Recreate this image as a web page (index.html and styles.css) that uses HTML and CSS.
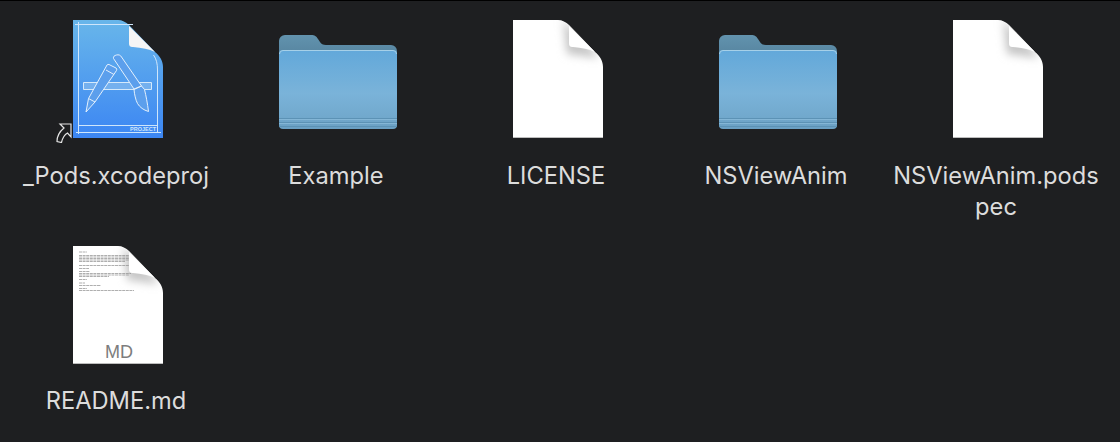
FILE: index.html
```html
<!DOCTYPE html>
<html lang="en">
<head>
  <meta charset="UTF-8">
  <title>NSViewAnim</title>
  <link rel="stylesheet" href="styles.css">
</head>
<body>

  <!-- shared shapes -->
  <svg class="defs" width="0" height="0">
    <defs>
      <linearGradient id="folderBack" x1="0" y1="0" x2="0" y2="1">
        <stop offset="0" stop-color="#6293ae"/>
        <stop offset="1" stop-color="#4d7995"/>
      </linearGradient>
      <linearGradient id="folderFront" x1="0" y1="0" x2="0" y2="1">
        <stop offset="0" stop-color="#62a8da"/>
        <stop offset="0.55" stop-color="#7ab3d9"/>
        <stop offset="0.84" stop-color="#72a9cd"/>
        <stop offset="1" stop-color="#6a9fc3"/>
      </linearGradient>
      <linearGradient id="xcodeBlue" x1="0" y1="0" x2="0" y2="1">
        <stop offset="0" stop-color="#68b6ea"/>
        <stop offset="1" stop-color="#3c86f3"/>
      </linearGradient>
      <filter id="foldBlur" x="-50%" y="-50%" width="200%" height="200%">
        <feGaussianBlur stdDeviation="4"/>
      </filter>
      <clipPath id="pageClip">
        <path d="M0 0h45c4 0 8 2 11 5l26 27c5 4 8 9 8 15v71H0z"/>
      </clipPath>
      <symbol id="folder" viewBox="0 0 120 100">
        <path d="M1 12a6 6 0 0 1 6-6h26c4 0 5 1 7 4l2 3c1 2 3 3 6 3h65a6 6 0 0 1 6 6v20H1z" fill="url(#folderBack)"/>
        <rect x="1" y="21" width="118" height="79" rx="4" fill="url(#folderFront)"/>
        <path d="M1.500 25a3.500 3.500 0 0 1 3.500-3.500h110a3.500 3.500 0 0 1 3.500 3.500" fill="none" stroke="#a6d0e8" stroke-width="1"/>
        <path d="M1 89.500h118M1 93.500h118M1 97.500h118" stroke="#5c92b5" stroke-width="1"/>
        <path d="M1 90.500h118M1 94.500h118" stroke="#84b6d6" stroke-width="1"/>
      </symbol>
      <symbol id="page" viewBox="0 0 90 118">
        <g clip-path="url(#pageClip)">
          <rect width="90" height="118" fill="#fff"/>
          <path d="M50 0L84 34V38L54 34z" fill="#c6c6c6" filter="url(#foldBlur)"/>
        </g>
        <path d="M0 117.500h90" stroke="#bdbdbd" stroke-width="1"/>
      </symbol>
      <symbol id="fold" viewBox="0 0 90 118">
        <path d="M56 6l26 26c-6-3-13-4-22-5-3 0-4-1-4-4z" fill="#fff"/>
      </symbol>
    </defs>
  </svg>

  <div class="grid">

    <div class="item">
      <div class="icon">
        <svg class="xcode" viewBox="0 0 90 118">
          <path d="M0 0h45c4 0 8 2 11 5l26 27c5 4 8 9 8 15v71H0z" fill="url(#xcodeBlue)"/>
          <path d="M5.500 2v112M2 4.500h58M3 112.500h85M5 105.500h79M84.500 112V50c0-6-1-11-4-15" fill="none" stroke="#cfe6fb" stroke-width="1"/>
          <path d="M56 6l26 26c-6-3-13-4-22-5-3 0-4-1-4-4z" fill="#f5f5f5"/>
          <path d="M10.500 62.500h68v7h-68z" fill="#74b0ee" stroke="#d4e9fb" stroke-width="1"/>
          <path d="M36 44.500l7 3.500a2 2 0 0 1 .5 2.500L22 82l-6.500-3.500L34 45a2 2 0 0 1 2-.500zM15.500 78.500L13 92l9-10M33 50l8 4.500" fill="#5c9fec" stroke="#e4f1fd" stroke-width="1" stroke-linejoin="round"/>
          <path d="M40.500 38.500c-.5-2 1-3 3-3.500 2-.5 4 0 5 2l20 29-7.500 3zM61 69.500l7.500-3.500 3 3.500c1.500 6 3 14 4 22-5-1.500-8.500-4-11-8-2-4-3-9-3.500-14z" fill="#5c9fec" stroke="#e4f1fd" stroke-width="1" stroke-linejoin="round"/>
          <text class="project" x="83" y="111" text-anchor="end">PROJECT</text>
        </svg>
        <svg class="alias" viewBox="0 0 16 20">
          <path d="M4 1H15V14L11.500 10C8 12 6.500 15 5.500 19.500L1 18.500C1 13 3 9 8 5Z" fill="#1e1f21" stroke="#e6e6e6" stroke-width="1.200"/>
        </svg>
      </div>
      <div class="name">_Pods.xcodeproj</div>
    </div>

    <div class="item">
      <div class="icon"><svg class="folder"><use href="#folder"/></svg></div>
      <div class="name">Example</div>
    </div>

    <div class="item">
      <div class="icon">
        <svg class="page" viewBox="0 0 90 118"><use href="#page"/><use href="#fold"/></svg>
      </div>
      <div class="name">LICENSE</div>
    </div>

    <div class="item">
      <div class="icon"><svg class="folder"><use href="#folder"/></svg></div>
      <div class="name">NSViewAnim</div>
    </div>

    <div class="item">
      <div class="icon">
        <svg class="page" viewBox="0 0 90 118"><use href="#page"/><use href="#fold"/></svg>
      </div>
      <div class="name">NSViewAnim.podspec</div>
    </div>

    <div class="item">
      <div class="icon">
        <svg class="page" viewBox="0 0 90 118">
          <use href="#page"/>
          <path class="doc-lines" d="M6 6h8M6 9.500h52M6 11h52M6 12.500h52M6 14h52M6 15.500h46M6 19.500h50M6 22.500h10M6 25.500h11M6 27.500h52M6 29h50M6 30.500h30M6 33.500h8M6 37h6M6 39.500h22M6 42.500h8M6 44.500h55"/>
          <use href="#fold"/>
          <text class="md" x="46" y="112" text-anchor="middle">MD</text>
        </svg>
      </div>
      <div class="name name-low">README.md</div>
    </div>

  </div>

</body>
</html>
```

FILE: styles.css
```css
body {
  margin: 0;
  background-color: #1e1f21;
  border-top: 1px solid #000;
  font-family: 'Inter', 'Liberation Sans', sans-serif;
  overflow: hidden;
}
.defs {
  display: block;
  height: 0;
}
.grid {
  display: grid;
  grid-template-columns: repeat(5, 220px);
  grid-template-rows: 226px auto;
  padding: 18px 0 0 6px;
}
.item {
  display: flex;
  flex-direction: column;
  align-items: center;
}
.icon {
  position: relative;
  height: 120px;
  width: 120px;
  margin-left: 4px;
  display: flex;
  align-items: center;
  justify-content: center;
}
.xcode, .page {
  width: 90px;
  height: 118px;
}
.folder {
  width: 120px;
  height: 100px;
}
.alias {
  position: absolute;
  left: -2px;
  bottom: -4px;
  width: 16px;
  height: 20px;
}
.name {
  width: 210px;
  margin-top: 21px;
  color: #dcdcdc;
  font-size: 23.7px;
  line-height: 31px;
  text-align: center;
  overflow-wrap: anywhere;
}
.name-low {
  margin-top: 20px;
}
.project {
  font-family: 'Liberation Sans', sans-serif;
  font-size: 5.5px;
  font-weight: bold;
  fill: #cfe6fb;
}
.doc-lines {
  fill: none;
  stroke: #8d8d8d;
  stroke-width: 0.7;
  stroke-dasharray: 3 0.6;
}
.md {
  font-family: 'Liberation Sans', sans-serif;
  font-size: 18px;
  fill: #7d7d7d;
}
```
